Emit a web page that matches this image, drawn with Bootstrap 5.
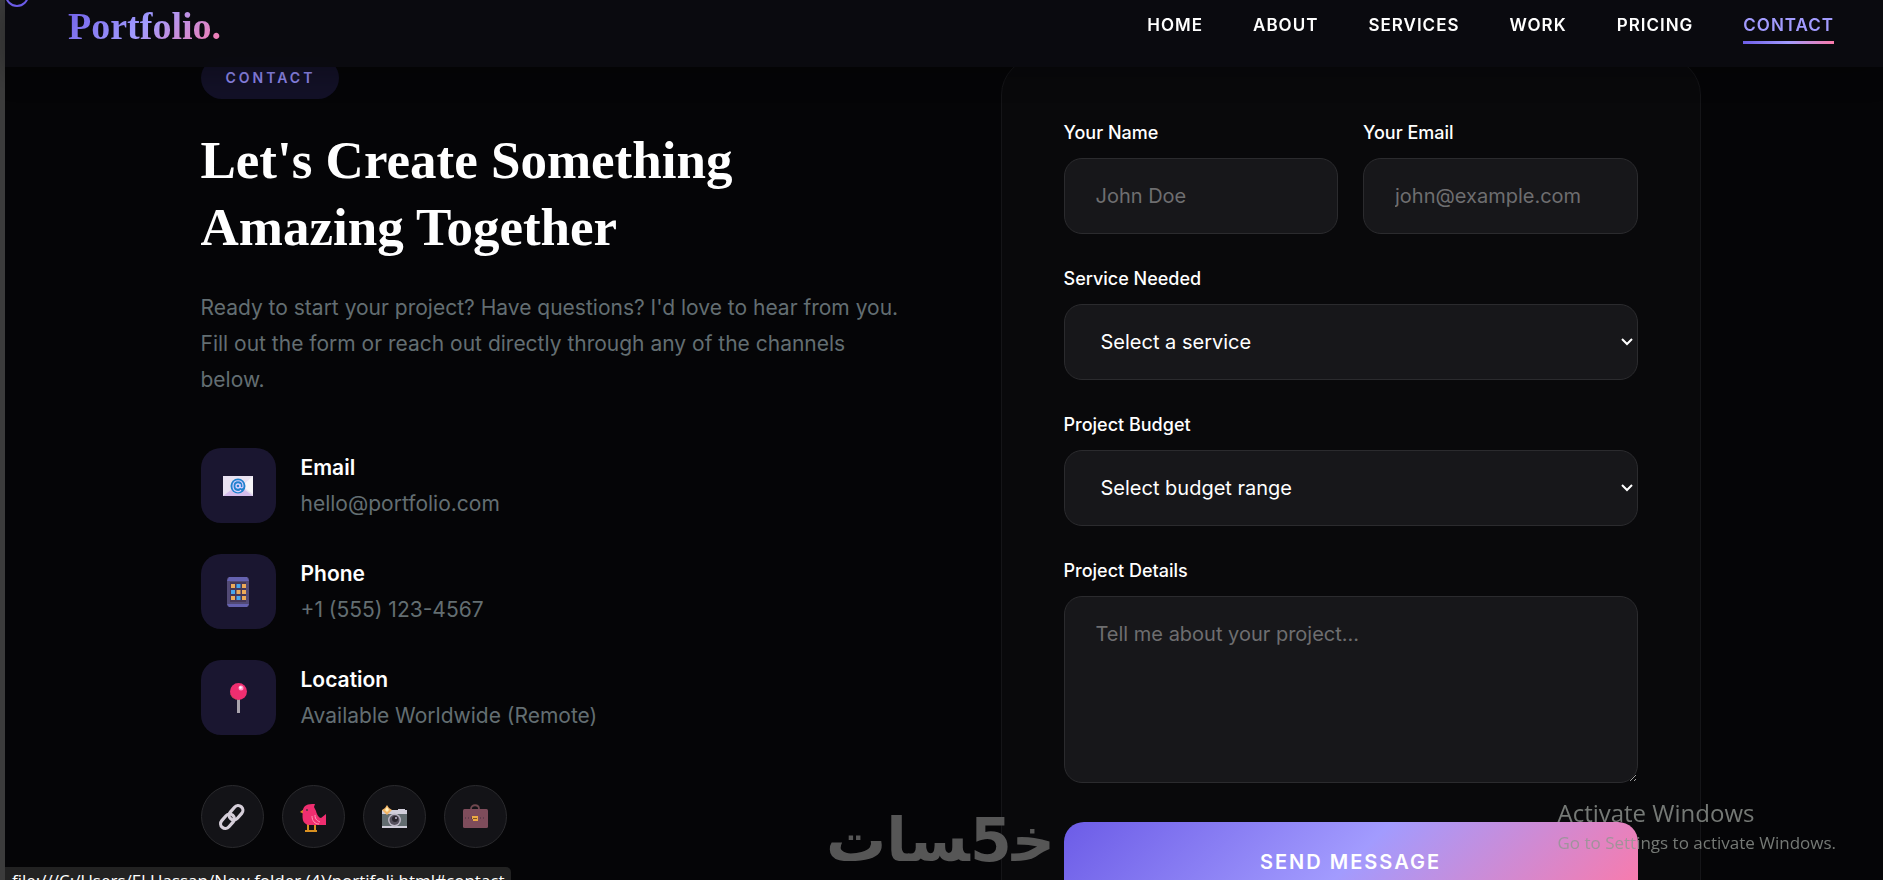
<!DOCTYPE html>
<html lang="en">
<head>
<meta charset="utf-8">
<meta name="viewport" content="width=device-width, initial-scale=1">
<title>Portfolio - Contact</title>
<link href="https://cdn.jsdelivr.net/npm/bootstrap@5.3.0/dist/css/bootstrap.min.css" rel="stylesheet">
<style>
:root{--grad:linear-gradient(135deg,#6c5ce7 0%,#a29bfe 50%,#fd79a8 100%)}
body{background:#050507;color:#fff;font-family:Inter,"Open Sans",sans-serif;font-size:21px;line-height:36px}
.page-shell{border-left:5px solid #3c3c3c}
.top-nav{height:67px;left:5px;padding:0 49px 15px 63px;background:rgba(10,10,15,.97);z-index:10;box-shadow:0 5px 30px rgba(0,0,0,.3)}
.brand{font:700 38px/50px "Liberation Serif",serif;background:var(--grad);-webkit-background-clip:text;background-clip:text;color:transparent}
.nav-list{gap:50px}
.nav-list a{color:#fff;font-size:17px;font-weight:600;line-height:24px;letter-spacing:1px;padding:5px 0 4px;border-bottom:3px solid transparent;display:block;text-decoration:none}
.nav-list a.active{color:#a29bfe;border-image:linear-gradient(90deg,#6c5ce7,#a29bfe 50%,#fd79a8) 1}
.contact-wrap{padding:57px 0 0 13px}
.contact-grid{max-width:1500px;display:grid;grid-template-columns:1fr 1fr;gap:100px}
.section-tag{background:#131127;color:#8d86ea;border-radius:50px;padding:9px 24px 9px 25px;font-size:14px;font-weight:600;line-height:24px;letter-spacing:3px}
.headline{font:700 53px/67px "Liberation Serif",serif;margin:28px 0 29px}
.soft{color:#636e72}
.info-list{gap:31px;margin:50px 0}
.info-icon{width:75px;height:75px;border-radius:20px;background:#1a1630}
.info-item{gap:25px}
.info-item h2{font-size:21px;line-height:36px;font-weight:600}
.social-row{gap:18px}
.social-link{width:63px;height:63px;border:1px solid #2a2a2d;background:#131317}
.form-panel{background:#09090b;border:1px solid #151518;border-radius:38px;padding:62px}
.form-pair{display:grid;grid-template-columns:1fr 1fr;gap:25px}
.field{margin-bottom:32px}
.field label{display:block;font-size:18px;font-weight:500;line-height:26px;margin-bottom:12px}
.field .form-control{height:76px;background:#17171a;border:1px solid #2b2b2e;border-radius:18px;padding:22px 31px;color:#fff;font-size:20px;line-height:30px}
.field select.form-control{padding:0 36px;background:#17171a url("data:image/svg+xml,%3Csvg xmlns='http://www.w3.org/2000/svg' width='12' height='8'%3E%3Cpath d='M1 1l5 5 5-5' fill='none' stroke='white' stroke-width='2'/%3E%3C/svg%3E") no-repeat right 4px center}
.field textarea.form-control{height:187px;resize:vertical}
.field .form-control::placeholder{color:#6e6e70;opacity:1}
.send-btn{height:80px;margin-top:39px;border:0;border-radius:20px;background:var(--grad);color:#fff;font-size:20px;font-weight:600;letter-spacing:2px}
.cursor-ring{left:5px;top:-17px;width:24px;height:24px;border:2px solid #6c5ce7;z-index:20}
.link-status{left:5px;bottom:0;height:13px;background:#222;border-radius:0 5px 0 0;font:17px/24px "Open Sans",sans-serif;padding:2px 6px 0 7px;z-index:15}
.os-notice{right:47px;bottom:22px;z-index:14;color:rgba(145,150,145,.8);font:17px/30px "Open Sans",sans-serif;pointer-events:none}
.os-notice strong{font-size:24px;font-weight:400;display:block}
.watermark{left:826px;bottom:0;z-index:13;color:#565656;font:700 60px/80px "DejaVu Sans",sans-serif;pointer-events:none}
@media(max-width:1100px){.contact-grid{grid-template-columns:1fr;gap:50px}.nav-list{gap:20px}}
</style>
</head>
<body>
<div class="page-shell vh-100 overflow-hidden position-relative">
<nav class="top-nav position-fixed top-0 end-0 d-flex justify-content-between align-items-center">
<a class="brand text-decoration-none" href="#home">Portfolio.</a>
<ul class="nav-list list-unstyled d-flex mb-0">
<li><a href="#home">HOME</a></li><li><a href="#about">ABOUT</a></li><li><a href="#services">SERVICES</a></li><li><a href="#work">WORK</a></li><li><a href="#pricing">PRICING</a></li><li><a class="active" href="#contact">CONTACT</a></li>
</ul>
</nav>
<main class="contact-wrap">
<div class="contact-grid mx-auto">
<section>
<div class="d-flex"><span class="section-tag">CONTACT</span></div>
<h1 class="headline">Let's Create Something<br>Amazing Together</h1>
<p class="soft mb-0">Ready to start your project? Have questions? I'd love to hear from you. Fill out the form or reach out directly through any of the channels below.</p>
<div class="info-list d-flex flex-column">
<div class="info-item d-flex align-items-center">
<div class="info-icon d-flex align-items-center justify-content-center flex-shrink-0">
<svg width="30" height="30" viewBox="0 0 30 30"><path fill="#e9e2f1" d="M0 5h30v20H0z"/><path fill="#d5bdec" d="M0 25l12-9h6l12 9z"/><path fill="#f7f5f8" d="M30 5v18L19 15z"/><circle cx="15" cy="15" r="7.5" fill="#2083ce"/><circle cx="15" cy="15" r="2" fill="none" stroke="#dcd1ff" stroke-width="1.3"/><path d="M17 13v3q3 2 3-1c0-7-10-7-10 0s7 6 8 4" fill="none" stroke="#dcd1ff" stroke-width="1.2"/></svg></div>
<div><h2 class="mb-0">Email</h2><div class="soft">hello@portfolio.com</div></div>
</div>
<div class="info-item d-flex align-items-center">
<div class="info-icon d-flex align-items-center justify-content-center flex-shrink-0">
<svg width="30" height="30" viewBox="0 0 30 30"><rect x="4" width="22" height="30" rx="3" fill="#524a75"/><path fill="#6562b0" d="M6 0h18l2 4H4zM4 27h22l-2 3H6z"/><rect x="7" y="5" width="16" height="20" fill="#453757"/><g fill="#edaa58"><path d="M8 7h4v4H8zM19 7h4v4h-4zM13.500 13h4v4h-4zM19 13h4v4h-4zM8 19h4v4H8zM19 19h4v4h-4z"/></g><path fill="#47a5ec" d="M13.500 7h4v4h-4zM8 13h4v4H8zM13.500 19h4v4h-4z"/></svg></div>
<div><h2 class="mb-0">Phone</h2><div class="soft">+1 (555) 123-4567</div></div>
</div>
<div class="info-item d-flex align-items-center">
<div class="info-icon d-flex align-items-center justify-content-center flex-shrink-0">
<svg width="30" height="30" viewBox="0 0 30 30"><path fill="#a9a4ad" d="M14 15h3v15h-3z"/><circle cx="15.500" cy="8.500" r="8.500" fill="#ef2e70"/><path fill="#b54e4a" d="M7 9c0 5 5 8 9 8-5-1-8-4-9-8z"/><circle cx="18" cy="5" r="2.500" fill="#ff9ccc"/><circle cx="17.500" cy="4.500" r="1.200" fill="#fff"/></svg></div>
<div><h2 class="mb-0">Location</h2><div class="soft">Available Worldwide (Remote)</div></div>
</div>
</div>
<div class="social-row d-flex">
<a class="social-link rounded-circle d-flex align-items-center justify-content-center" href="#links" aria-label="Links"><svg width="28" height="28" viewBox="0 0 28 28"><g fill="none" stroke="#d5ced9" stroke-width="3.200"><rect x="1.500" y="13.500" width="16" height="9.500" rx="4.750" transform="rotate(-49 9.500 18.250)"/><rect x="10" y="5" width="16" height="9.500" rx="4.750" transform="rotate(-49 18 9.750)"/></g></svg></a>
<a class="social-link rounded-circle d-flex align-items-center justify-content-center" href="#bird" aria-label="Twitter"><svg width="26" height="30" viewBox="0 0 26 30"><path fill="#d99020" d="M4 7L0 10l4 2zM7 22h2v6h5v-6h2v6h1v2H5v-2h2z"/><path fill="#ef2e70" d="M3 8c1-5 4-6 12-6l-1 3 2 4c1 4 3 7 5 7l5-4v11H9c-7-1-7-7-6-15z"/><circle cx="7" cy="8" r="1" fill="#54303e"/><path d="M12 14c0 5 3 8 7 8m-4-9c0 5 3 6 5 7" fill="none" stroke="#ff98b7" stroke-width="1"/></svg></a>
<a class="social-link rounded-circle d-flex align-items-center justify-content-center" href="#photos" aria-label="Instagram"><svg width="26" height="26" viewBox="0 0 26 26"><rect x="1" y="6" width="25" height="18" rx="1" fill="#626c70"/><path fill="#d1cedb" d="M1 6h25v4H1zM1 22h25v2H1zM17 5h7v2h-7z"/><circle cx="13.500" cy="16" r="6.500" fill="#bbb5c4"/><circle cx="13.500" cy="16" r="5" fill="#55505d"/><circle cx="14" cy="15" r="3" fill="#29252e"/><circle cx="15" cy="14" r="1" fill="#c2b9d1"/><path fill="#f3b566" d="M6 1l2 3 3 2-3 3-2 2-2-2-3-3 3-2z"/><path fill="#fff0bd" d="M6 3l2 3-2 2-2-2z"/></svg></a>
<a class="social-link rounded-circle d-flex align-items-center justify-content-center" href="#work" aria-label="LinkedIn"><svg width="26" height="26" viewBox="0 0 26 26"><path d="M9 5c0-5 8-5 8 0" fill="none" stroke="#70484f" stroke-width="1.800"/><rect x="1" y="5" width="25" height="19" rx="1.500" fill="#7e4c5b"/><path d="M3 14h21" stroke="#472f41" stroke-dasharray="1 2"/><path fill="#edaa45" d="M10 12h6v5h-5v-2h-1z"/><path d="M11 14.500h4" stroke="#80531f"/></svg></a>
</div>
</section>
<form class="form-panel">
<div class="form-pair">
<div class="field"><label for="name">Your Name</label><input class="form-control" id="name" type="text" placeholder="John Doe"></div>
<div class="field"><label for="email">Your Email</label><input class="form-control" id="email" type="email" placeholder="john@example.com"></div>
</div>
<div class="field"><label for="service">Service Needed</label><select class="form-control" id="service"><option>Select a service</option></select></div>
<div class="field"><label for="budget">Project Budget</label><select class="form-control" id="budget"><option>Select budget range</option></select></div>
<div class="field mb-0"><label for="details">Project Details</label><textarea class="form-control" id="details" placeholder="Tell me about your project..."></textarea></div>
<button class="send-btn w-100" type="button">SEND MESSAGE</button>
</form>
</div>
</main>
<div class="cursor-ring position-fixed rounded-circle"></div>
<div class="watermark position-fixed" lang="ar" dir="rtl">خ&zwj;5&zwj;سات</div>
<div class="os-notice position-fixed"><strong>Activate Windows</strong>Go to Settings to activate Windows.</div>
<div class="link-status position-fixed overflow-hidden text-nowrap">file:///C:/Users/El Hassan/New folder (4)/portifoli.html#contact</div>
</div>
<script src="https://cdn.jsdelivr.net/npm/bootstrap@5.3.0/dist/js/bootstrap.bundle.min.js"></script>
</body>
</html>
